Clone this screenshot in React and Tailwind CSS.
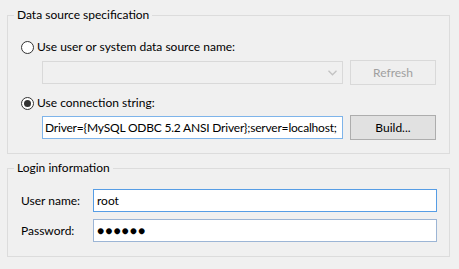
import React from "react";

function Radio({ checked }) {
  return (
    <span className="flex h-[13px] w-[13px] shrink-0 items-center justify-center rounded-full border border-[#333333] bg-white">
      {checked ? <span className="h-[7px] w-[7px] rounded-full bg-[#333333]" /> : null}
    </span>
  );
}

function GroupBox({ title, className, children }) {
  return (
    <div className={"relative ml-[7px] w-[443px] border border-[#dcdcdc] " + className}>
      <span className="absolute left-[6px] top-[-9px] bg-[#f0f0f0] px-[3px] leading-[16px]">{title}</span>
      {children}
    </div>
  );
}

export default function App() {
  return (
    <div
      className="h-[269px] w-[459px] overflow-hidden bg-[#f0f0f0] text-[12px] text-black"
      style={{ fontFamily: 'Lato, "Noto Sans", sans-serif' }}
    >
      <GroupBox title="Data source specification" className="mt-[15px] pb-[13px] pl-[13px] pr-[13px] pt-[23px]">
        <div className="flex h-[16px] items-center gap-[3px] leading-[16px]">
          <Radio />
          <span>Use user or system data source name:</span>
        </div>

        <div className="ml-[21px] mt-[5px] flex items-center gap-[7px]">
          <div className="flex h-[23px] w-[301px] items-center justify-end border border-[#d9d9d9] bg-[#f0f0f0] pr-[5px]">
            <svg width="9" height="6" viewBox="0 0 9 6" fill="none">
              <path d="M0.5 0.8 L4.5 4.8 L8.5 0.8" stroke="#c2c2c2" strokeWidth="1.3" />
            </svg>
          </div>
          <button
            type="button"
            disabled
            className="h-[25px] w-[86px] border border-[#d9d9d9] bg-[#efefef] text-[#a0a0a0]"
          >
            Refresh
          </button>
        </div>

        <div className="mt-[10px] flex h-[16px] items-center gap-[3px] leading-[16px]">
          <Radio checked />
          <span>Use connection string:</span>
        </div>

        <div className="ml-[21px] mt-[4px] flex items-center gap-[7px]">
          <div className="flex h-[23px] w-[301px] items-center overflow-hidden whitespace-nowrap border border-[#7eb4ea] bg-white pl-[2px] tracking-[-0.2px]">
            Driver={"{"}MySQL ODBC 5.2 ANSI Driver{"}"};server=localhost;
          </div>
          <button type="button" className="h-[25px] w-[86px] border border-[#adadad] bg-[#e1e1e1]">
            Build...
          </button>
        </div>
      </GroupBox>

      <GroupBox title="Login information" className="mt-[14px] pb-[14px] pl-[13px] pr-[12px] pt-[20px]">
        <div className="flex items-center">
          <span className="w-[72px]">User name:</span>
          <div className="flex h-[23px] flex-1 items-center border border-[#569de5] bg-white pl-[3px]">root</div>
        </div>
        <div className="mt-[7px] flex items-center">
          <span className="w-[72px]">Password:</span>
          <div className="flex h-[23px] flex-1 items-center border border-[#9cb5d5] bg-white pl-[3px] tracking-[1px]">
            ●●●●●●
          </div>
        </div>
      </GroupBox>
    </div>
  );
}
